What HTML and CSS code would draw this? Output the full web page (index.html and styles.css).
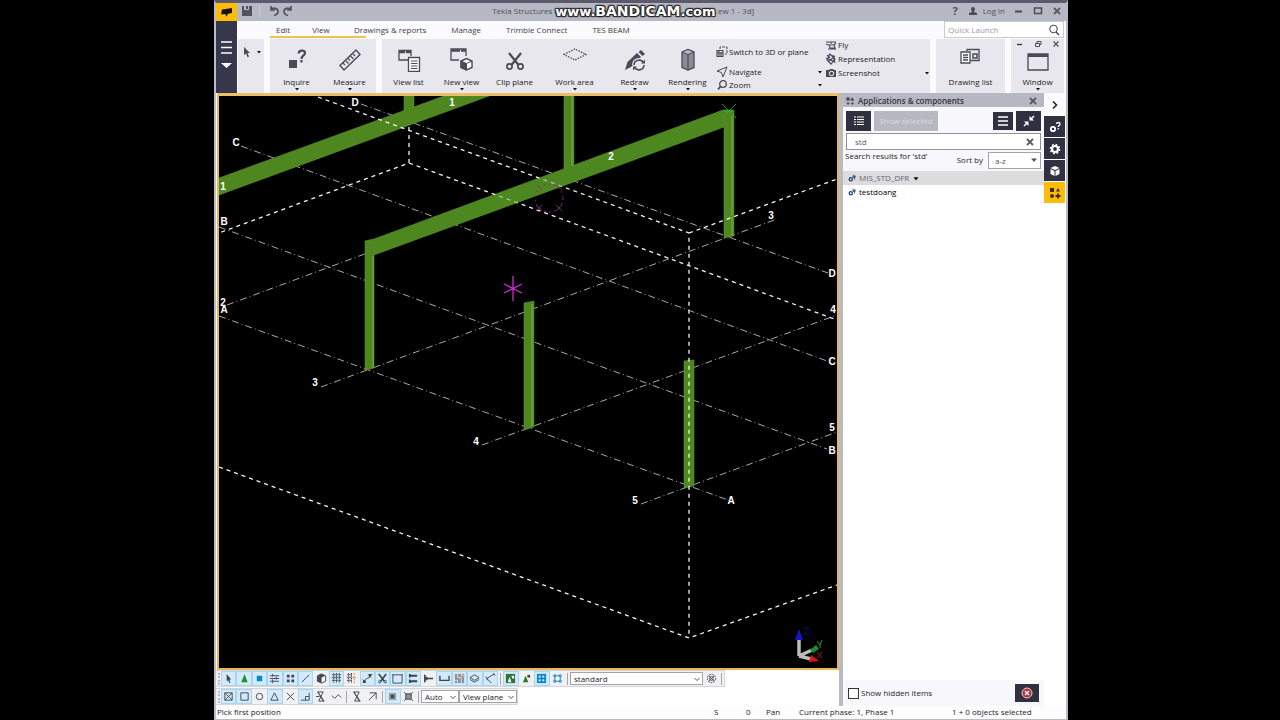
FILE: index.html
```html
<!DOCTYPE html>
<html lang="en">
<head>
<meta charset="utf-8">
<title>Tekla Structures</title>
<link rel="stylesheet" href="styles.css">
</head>
<body>
<svg class="sprite" aria-hidden="true">
  <symbol id="caret" viewBox="0 0 6 4"><path d="M1 1h4L3 3.500z" fill="#111"/></symbol>
  <symbol id="chev" viewBox="0 0 8 8"><path d="M1.500 3l2.500 2.500L6.500 3" fill="none" stroke="#555" stroke-width="1"/></symbol>
  <symbol id="close" viewBox="0 0 10 10"><path d="M2 2l6 6M8 2l-6 6" stroke="#5b5b66" stroke-width="1.800" fill="none"/></symbol>
  <symbol id="gears" viewBox="0 0 10 10"><g fill="none" stroke="#1f3f7d"><circle cx="3.500" cy="6.500" r="2" stroke-width="1.600"/><circle cx="7.500" cy="3.500" r="1.200" stroke-width="1.200"/><path d="M7 1L6 3M9 2L8 7" stroke-width="1"/></g></symbol>
</svg>
<div class="app">
  <header class="titlebar">
    <span class="logo"><svg viewBox="0 0 21 17" width="21" height="18"><path d="M6 6l10-1.500v5l-4 .8-1.500 3-1-2.500H5z" fill="#17130a"/></svg></span>
    <button class="plain" aria-label="Save"><svg viewBox="0 0 12 12" width="12" height="12"><path d="M1 1h2v4h5V1h3v10H1zM5 1h2v3H5z" fill="#51525e"/></svg></button>
    <span class="tsep"></span>
    <button class="plain" aria-label="Undo"><svg viewBox="0 0 12 12" width="12" height="12"><path d="M3 1v4h4M3 5c2-3 7-2 7 1.500C10 9 8 10 6 10.500" fill="none" stroke="#51525e" stroke-width="1.700"/></svg></button>
    <button class="plain" aria-label="Redo"><svg viewBox="0 0 12 12" width="12" height="12"><path d="M9 1v4H5M9 5C7 2 2 3 2 6.500 2 9 4 10 6 10.500" fill="none" stroke="#51525e" stroke-width="1.700"/></svg></button>
    <div class="title"><span>Tekla Structures -</span><span>ew 1 - 3d]</span><strong class="mark">www.<b>BANDICAM</b>.com</strong></div>
    <button class="plain help" aria-label="Help">?</button>
    <button class="plain login"><svg viewBox="0 0 10 10" width="10" height="10"><path d="M3 3a2 2 0 0 1 4 0c0 1.500-1 1.500-1 3l3 1v2H1V7l3-1c0-1.500-1-1.500-1-3z" fill="#4b4b58"/></svg>Log in</button>
    <button class="win" aria-label="Minimize"><svg viewBox="0 0 10 10" width="10" height="10"><path d="M1 5.500h7" stroke="#4b4b58" stroke-width="2"/></svg></button>
    <button class="win" aria-label="Maximize"><svg viewBox="0 0 10 10" width="10" height="10"><path d="M1.500 2v5.500h7V2z" fill="none" stroke="#4b4b58" stroke-width="1.500"/></svg></button>
    <button class="win" aria-label="Close"><svg width="10" height="10"><use href="#close"/></svg></button>
  </header>

  <div class="top">
    <button class="menu" aria-label="Menu"><svg viewBox="0 0 21 72" width="21" height="72"><path d="M5 21h11M5 26.500h11M5 32h11" stroke="#fff" stroke-width="1.500"/><path d="M5 42h11l-5.500 5z" fill="#fff"/></svg></button>
    <div class="topmain">
      <div class="tabrow">
        <nav class="tabs">
          <span class="active"><a href="#">Edit</a><a href="#">View</a></span><a href="#" class="reports">Drawings &amp; reports</a><a href="#">Manage</a><a href="#">Trimble Connect</a><a href="#">TES BEAM</a>
        </nav>
        <label class="quick"><input type="text" placeholder="Quick Launch" aria-label="Quick Launch"><svg viewBox="0 0 12 12" width="12" height="12"><circle cx="5.500" cy="5" r="3.800" fill="none" stroke="#3f3f4b" stroke-width="1"/><path d="M8 8l3 3" stroke="#3f3f4b" stroke-width="1.300"/></svg></label>
      </div>
      <div class="ribbon">
        <div class="group pick"><button class="plain" aria-label="Select"><svg viewBox="0 0 10 12" width="10" height="12"><path d="M2 1l6 6H5.500l1.500 3.500-1.500.7L4 7.500 2 9z" fill="#4b4b58"/></svg></button><svg width="6" height="4"><use href="#caret"/></svg></div>
        <div class="group">
          <button class="big"><svg viewBox="0 0 24 24" width="24" height="24"><path d="M4 12h8v8H4z" fill="#4b4b58"/><path d="M13.500 5.500C14 1.500 20 2 20 5c0 2.500-3.500 2.500-3.500 6M16.500 12v2.500" fill="none" stroke="#4b4b58" stroke-width="2.200"/></svg><span>Inquire</span><svg class="car" width="6" height="4"><use href="#caret"/></svg></button>
          <button class="big"><svg viewBox="0 0 24 24" width="24" height="24"><path d="M2 17.500L18 2l4 4.500L6 22z" fill="none" stroke="#4b4b58" stroke-width="1.400"/><path d="M5 15l2 2M7.500 12.500l3 3M10 10.500l2 2M12.500 8l3 3M15 6l2 2" stroke="#4b4b58" stroke-width="1.200"/></svg><span>Measure</span><svg class="car" width="6" height="4"><use href="#caret"/></svg></button>
        </div>
        <div class="group wide">
          <button class="big"><svg viewBox="0 0 24 24" width="24" height="24"><path d="M11 12H2V2.500h12V8" fill="none" stroke="#4b4b58" stroke-width="1.300"/><path d="M2 4h12" stroke="#4b4b58" stroke-width="2.500" stroke-dasharray="6 1"/><path d="M11.500 9.500h11v14h-11z" fill="#fff" stroke="#4b4b58" stroke-width="1.300"/><path d="M14 13h6.500M14 15.500h6.500M14 18h6.500M14 20.500h6.500" stroke="#4b4b58" stroke-width="1.200"/></svg><span>View list</span></button>
          <button class="big"><svg viewBox="0 0 24 24" width="24" height="24"><path d="M9 12H1V1h15v7" fill="none" stroke="#4b4b58" stroke-width="1.300"/><path d="M1 2.500h15" stroke="#4b4b58" stroke-width="2.500" stroke-dasharray="9 1"/><path d="M11 13l5.500-2.500L22 13v6.500L16.500 22 11 19.500z" fill="#fff" stroke="#4b4b58" stroke-width="1.400"/><path d="M11 13l5.500 2.500V22L11 19.500zM16.500 15.500L22 13" fill="#4b4b58" stroke="#4b4b58"/></svg><span>New view</span><svg class="car" width="6" height="4"><use href="#caret"/></svg></button>
          <button class="big"><svg viewBox="0 0 24 24" width="24" height="24"><path d="M6 5l9.500 12M18 5L8.500 17" stroke="#4b4b58" stroke-width="2.200"/><circle cx="6.500" cy="18.500" r="2.600" fill="none" stroke="#4b4b58" stroke-width="1.700"/><circle cx="17.500" cy="18.500" r="2.600" fill="none" stroke="#4b4b58" stroke-width="1.700"/></svg><span>Clip plane</span></button>
          <button class="big area"><svg viewBox="0 0 24 24" width="24" height="24"><path d="M1 6.500L12 1l11 5.500L12 12z" fill="none" stroke="#4b4b58" stroke-width="1.300" stroke-dasharray="1.500 1.200"/></svg><span>Work area</span><svg class="car" width="6" height="4"><use href="#caret"/></svg></button>
          <button class="big"><svg viewBox="0 0 24 24" width="24" height="24"><path d="M2 22l2.500-8 9.500-9 4 4-10 10zM15.500 4L18 2l4 4-2.500 2z" fill="#4b4b58"/><path d="M11 17a5 5 0 0 1 9.500-2M21 17a5 5 0 0 1-9.500 2" stroke="#e8e7ee" stroke-width="4" fill="none"/><path d="M11 17a5 5 0 0 1 9.500-2M21 17a5 5 0 0 1-9.500 2" stroke="#4b4b58" stroke-width="1.600" fill="none"/><path d="M18 15.500h4v-4zM14 18.500h-4v4z" fill="#4b4b58"/></svg><span>Redraw</span><svg class="car" width="6" height="4"><use href="#caret"/></svg></button>
          <button class="big"><svg viewBox="0 0 24 24" width="24" height="24"><path d="M6 4L12 1.500 18 4v15.500L12 22l-6-2.500z" fill="#8b8b96" stroke="#4b4b58" stroke-width="1.300"/><path d="M12 6.500V22" fill="none" stroke="#4b4b58" stroke-width="1.200"/><path d="M6 4l6-2.500L18 4l-6 2.500z" fill="#b9b9c2" stroke="#4b4b58"/></svg><span>Rendering</span><svg class="car" width="6" height="4"><use href="#caret"/></svg></button>
          <div class="smallcol three">
            <button class="small"><svg viewBox="0 0 12 12" width="12" height="12"><path d="M4 3V1h7v7H9" fill="none" stroke="#4b4b58" stroke-dasharray="3 1"/><path d="M1 4.500h6v6H1zM3 4.500v6M1 7h6M5 6v4" fill="none" stroke="#4b4b58" stroke-width="1.200"/></svg>Switch to 3D or plane</button>
            <button class="small"><svg viewBox="0 0 12 12" width="12" height="12"><path d="M1 5l10-4-4 10-1.500-4.500z" fill="none" stroke="#4b4b58"/></svg>Navigate<svg class="end" width="6" height="4"><use href="#caret"/></svg></button>
            <button class="small"><svg viewBox="0 0 12 12" width="12" height="12"><circle cx="7" cy="5" r="3.300" fill="none" stroke="#4b4b58" stroke-width="1.300"/><path d="M4.500 7.500L2 10.500" stroke="#4b4b58" stroke-width="1.800"/></svg>Zoom<svg class="end" width="6" height="4"><use href="#caret"/></svg></button>
          </div>
          <div class="smallcol tight">
            <button class="small"><svg viewBox="0 0 12 12" width="12" height="12"><path d="M1 3h10M6 3v2M1 5l3 1h5l2-2M4 6l1 3h5L9 5M3 10h8" fill="none" stroke="#4b4b58" stroke-width="1.100"/></svg>Fly</button>
            <button class="small"><svg viewBox="0 0 12 12" width="12" height="12"><path d="M2 2l3 3M5 1l5 5-4 5-4-4zM1 5l9 4M8 2l2 8M3 9l7-6" fill="none" stroke="#4b4b58" stroke-width="1.200"/></svg>Representation</button>
            <button class="small"><svg viewBox="0 0 12 12" width="12" height="12"><path d="M1 3h3l1-1h3l1 1h2v7H1z" fill="#4b4b58"/><circle cx="6.500" cy="6.500" r="2.200" fill="none" stroke="#fff"/></svg>Screenshot<svg class="end" width="6" height="4"><use href="#caret"/></svg></button>
          </div>
        </div>
        <div class="group"><button class="big draw"><svg viewBox="0 0 24 24" width="24" height="24"><path d="M2 4h9v11H2z" fill="#fff" stroke="#4b4b58" stroke-width="1.300"/><path d="M4 7h5M4 9.500h5M4 12h5M8 3V1.500h12v11h-9" fill="none" stroke="#4b4b58" stroke-width="1.300"/><path d="M14 6h4v4h-4z" fill="none" stroke="#4b4b58" stroke-width="1.500"/></svg><span>Drawing list</span></button></div>
        <div class="group window">
          <div class="mdi"><button class="plain" aria-label="Minimize view"><svg viewBox="0 0 8 8" width="8" height="8"><path d="M1 4.500h5" stroke="#333" stroke-width="1.300"/></svg></button><button class="plain" aria-label="Restore view"><svg viewBox="0 0 8 8" width="8" height="8"><path d="M3 3V1.500h4v3H5.500M1.500 3.500h4v3h-4z" fill="none" stroke="#4b4b58"/></svg></button><button class="plain" aria-label="Close view"><svg width="8" height="8"><use href="#close"/></svg></button></div>
          <button class="big winbtn"><svg viewBox="0 0 24 20" width="24" height="20"><path d="M2 2h20v16H2z" fill="none" stroke="#4b4b58" stroke-width="1.300"/><path d="M2 3.500h20" stroke="#4b4b58" stroke-width="3"/></svg><span>Window</span><svg class="car" width="6" height="4"><use href="#caret"/></svg></button>
        </div>
      </div>
    </div>
  </div>

  <main class="work">
    <section class="left">
      <div class="stage">
        <svg viewBox="219 96 618 572" preserveAspectRatio="xMinYMin slice" role="img" aria-label="3D model view">
          <g class="grid">
            <path d="M361 104L828 273M241 146L827 361M219 227L827 449M219 316L728 500M227 305L370 252M321 387L777 219M482 445L837 315M641 504L837 432"/>
          </g>
          <g fill="#4e871f" stroke="#5f9230" stroke-width=".6">
            <path d="M404 96h10v18h-10zM564 96h10v76h-10z"/>
            <path d="M219 178L444 96h45L219 195z"/>
            <path d="M365 241l9-2L723 110h11l-10 17L374 255z"/>
            <path d="M365 241l9 2v125l-9 2zM724 111h10v125l-10 2zM524 303l10-2v126l-10 3zM684 361l10-1v126l-10 2z"/>
          </g>
          <path d="M373 256v112M732 116v120M532 304v122M572 96v70" stroke="#68993a" stroke-width="2" fill="none"/>
          <path class="box" d="M318 97L689 233V638M409 127v36L219 233M409 163L837 320M689 233L837 179M219 467L689 638L837 585"/>
          <path d="M374 255V240L724 110v17z" fill="#4e871f" opacity=".45"/>
          <path d="M513 276v25M504 284l18 9M522 284l-18 9" stroke="#d02bd0" stroke-width="1.300"/>
          <circle cx="549" cy="198" r="14" fill="none" stroke="#8a2a86" stroke-dasharray="2 3"/>
          <path d="M536 205l6 6M542 205l-6 6M556 205l6 6M562 205l-6 6M537 185l5 5M557 185l5 5" stroke="#8a2a86" stroke-width=".8"/>
          <path d="M722 104l14 14M736 104l-14 14M724 111h10" stroke="#28b83a" stroke-width=".8"/>
          <g class="lbl">
            <text x="355" y="106">D</text><text x="452" y="106">1</text><text x="236" y="146">C</text><text x="223" y="190">1</text><text x="224" y="225">B</text><text x="223" y="306">2</text><text x="224" y="313">A</text><text x="611" y="160">2</text><text x="771" y="219">3</text><text x="832" y="277">D</text><text x="833" y="313">4</text><text x="832" y="365">C</text><text x="832" y="431">5</text><text x="832" y="454">B</text><text x="731" y="504">A</text><text x="635" y="504">5</text><text x="476" y="445">4</text><text x="315" y="386">3</text>
          </g>
          <path d="M799 656V638M799 656l13-6M799 656l12 3" stroke="#bcbcbc" stroke-width="3.500"/>
          <path d="M795 640l4-11 4 11z" fill="#1414cc"/><path d="M810 650l6-5 3 4-6 4z" fill="#1d8a2a"/><path d="M811 655l8 6-10 1z" fill="#d81818"/>
          <path d="M803 628h6l-5 6h6" stroke="#0c0c7a" fill="none"/><path d="M817 641l3 4 2-5M820 645v3" stroke="#1f9a33" fill="none"/><path d="M817 652l5 6M822 652l-5 6" stroke="#a01515"/>
        </svg>
      </div>
      <div class="bar one">
        <span class="grip"></span>
        <div class="tools eighteen">
          <button class="t on" aria-label="Select all"><svg viewBox="0 0 12 12"><path d="M4 1l5 6H7l1 4H7L5.500 8 4 9z"/></svg></button>
          <button class="t on" aria-label="Select components"><svg viewBox="0 0 12 12"><path d="M6 1l3.500 9h-7z" fill="#23902f"/></svg></button>
          <button class="t on" aria-label="Select parts"><svg viewBox="0 0 12 12"><path d="M3 3h6v6H3z" fill="#0b88c8"/></svg></button>
          <button class="t on" aria-label="Select surfaces"><svg viewBox="0 0 12 12"><path class="s" d="M1 3h10M1 6h10M1 9h10M4 1v3M8 4v3M4 7v4"/></svg></button>
          <button class="t on" aria-label="Select points"><svg viewBox="0 0 12 12"><path d="M2 2h3v3H2zM7 2h3v3H7zM2 7h3v3H2zM7 7h3v3H7z"/></svg></button>
          <button class="t on" aria-label="Select lines"><svg viewBox="0 0 12 12"><path class="s" d="M2 10l8-8"/></svg></button>
          <button class="t" aria-label="Select objects"><svg viewBox="0 0 12 12"><path class="s" d="M1.500 3L6 1l4.500 2v6L6 11 1.500 9z"/><path d="M1.500 3L6 5v6L1.500 9zM6 1l4 2-4 2-4-2z"/></svg></button>
          <button class="t on" aria-label="Select grids"><svg viewBox="0 0 12 12"><path class="s" d="M1 2h10M1 5h10M1 8h10M3 0v11M6 0v11M9 0v11" stroke-dasharray="2 .6"/></svg></button>
          <button class="t" aria-label="Select grid lines"><svg viewBox="0 0 12 12"><path class="s" d="M1 2h5M1 5h5M1 8h5M3 0v11M6 0v11" stroke-dasharray="2 .6"/><path class="s tan" d="M9 0v11M7 5h4" stroke-dasharray="2 1"/></svg></button>
          <button class="t on" aria-label="Select welds"><svg viewBox="0 0 12 12"><path class="s" d="M1 10l4-4 3-1 3-4M1 7l3 3M7 2l3 3"/><path d="M1 8h3v3H1zM7 1h4L8 5z"/></svg></button>
          <button class="t on" aria-label="Select cuts"><svg viewBox="0 0 12 12"><path class="s" d="M2 1l6 8M10 1L4 9" stroke-width="1.800"/><circle class="s" cx="3" cy="9.500" r="1.300"/><circle class="s" cx="9" cy="9.500" r="1.300"/></svg></button>
          <button class="t on" aria-label="Select views"><svg viewBox="0 0 12 12"><path class="s" d="M0 2h12M1 2v9h10V2"/></svg></button>
          <button class="t on" aria-label="Select bolt groups"><svg viewBox="0 0 12 12"><path class="s" d="M2 3h8M2 9h8M2 1v4M2 7v4" stroke-width="2"/></svg></button>
          <button class="t" aria-label="Select bolts"><svg viewBox="0 0 12 12"><path class="s" d="M2 2v8M4 4v4M2 6h9" stroke-width="1.800"/></svg></button>
          <button class="t on" aria-label="Select rebars"><svg viewBox="0 0 12 12"><path class="s" d="M1 3v5h10V3" stroke-width="1.500"/></svg></button>
          <button class="t on" aria-label="Select pours"><svg viewBox="0 0 12 12"><path d="M1 1h10v10H1z" fill="#8e929c"/><path d="M4 1v4h4v6M1 8h3v3M8 1v2h3" fill="none" stroke="#dfe2e8"/></svg></button>
          <button class="t on" aria-label="Select pour breaks"><svg viewBox="0 0 12 12"><path class="s" d="M1 5l5-3 5 3-5 3zM1 7l5 3 5-3"/></svg></button>
          <button class="t on" aria-label="Select distances"><svg viewBox="0 0 12 12"><path class="s" d="M2 6l8-5M2 6l5 5M1 4l2 4M9 0l2 3"/></svg></button>
        </div>
        <span class="sep"></span>
        <div class="tools four">
          <button class="t on" aria-label="Select in assemblies"><svg viewBox="0 0 12 12"><path d="M1 1h10v10H1z" fill="#2f7136"/><path d="M3 10l2-6 2 6zM7 3h3v3H8z" fill="#fff"/></svg></button>
          <button class="t" aria-label="Select components objects"><svg viewBox="0 0 12 12"><path d="M2 10l3-7 3 7z" fill="#277a31"/><path d="M7 2h3v3H7z"/></svg></button>
          <button class="t on" aria-label="Select assemblies"><svg viewBox="0 0 12 12"><path d="M1 1h10v10H1z" fill="#0b88c8"/><path d="M3 3h2v2H3zM7 3h2v2H7zM3 7h2v2H3zM7 7h2v2H7z" fill="#fff"/></svg></button>
          <button class="t" aria-label="Select assembly objects"><svg viewBox="0 0 12 12"><path class="s blue" d="M2 2h2v2H2zM8 2h2v2H8zM2 8h2v2H2zM8 8h2v2H8zM4 3h4M4 9h4M3 4v4M9 4v4"/></svg></button>
        </div>
        <span class="sep"></span>
        <span class="pickbox filter"><select aria-label="Selection filter"><option>standard</option></select><svg width="8" height="8"><use href="#chev"/></svg></span>
        <button class="t last" aria-label="Filter settings"><svg viewBox="0 0 12 12"><circle class="s" cx="6" cy="6" r="4.500" stroke-dasharray="2 1"/><circle class="s" cx="6" cy="6" r="2"/><path class="s" d="M3 3l6 6M9 3L3 9"/></svg></button>
        <span class="sep"></span>
      </div>
      <div class="bar two">
        <span class="grip"></span>
        <div class="tools eight">
          <button class="t on" aria-label="Snap to points"><svg viewBox="0 0 12 12"><path class="s" d="M2 2h8v8H2zM2 2l8 8M10 2l-8 8"/></svg></button>
          <button class="t on" aria-label="Snap to end points"><svg viewBox="0 0 12 12"><path class="s" d="M2 2h8v8H2z"/></svg></button>
          <button class="t" aria-label="Snap to centers"><svg viewBox="0 0 12 12"><circle class="s" cx="6" cy="6" r="3.500"/></svg></button>
          <button class="t on" aria-label="Snap to midpoints"><svg viewBox="0 0 12 12"><path class="s" d="M6 2l4 8H2z"/></svg></button>
          <button class="t" aria-label="Snap to intersections"><svg viewBox="0 0 12 12"><path class="s" d="M2 2l8 8M10 2l-8 8"/></svg></button>
          <button class="t on" aria-label="Snap perpendicular"><svg viewBox="0 0 12 12"><path class="s" d="M1 10h9V2M6 10V6h4"/></svg></button>
          <button class="t" aria-label="Snap to extensions"><svg viewBox="0 0 12 12"><path class="s" d="M3 1h6L4 11h6zM3 1l6 10M1 6h4"/></svg></button>
          <button class="t" aria-label="Snap to any position"><svg viewBox="0 0 12 12"><path class="s" d="M1 5l3 3 4-4 3 3"/></svg></button>
        </div>
        <span class="sep"></span>
        <div class="tools pair">
          <button class="t" aria-label="Snap to nearest"><svg viewBox="0 0 12 12"><path class="s" d="M3 1h6L4 11h6zM3 1l6 10"/></svg></button>
          <button class="t" aria-label="Snap to lines"><svg viewBox="0 0 12 12"><path class="s" d="M2 10l8-8M3 2h7v7"/></svg></button>
        </div>
        <span class="sep"></span>
        <div class="tools pair">
          <button class="t on" aria-label="Snap to reference lines"><svg viewBox="0 0 12 12"><path d="M2 2h8v8H2z" fill="#9ba1ac"/><path d="M4 4h4v4H4z"/></svg></button>
          <button class="t" aria-label="Snap to geometry lines"><svg viewBox="0 0 12 12"><path d="M3 3h6v6H3z" fill="#8b909a"/><path class="s" d="M1 1l2 2M11 1L9 3M1 11l2-2M11 11L9 9M3 3h6v6H3z"/></svg></button>
        </div>
        <span class="sep"></span>
        <span class="pickbox auto"><select aria-label="Snap depth"><option>Auto</option></select><svg width="8" height="8"><use href="#chev"/></svg></span>
        <span class="pickbox plane"><select aria-label="Plane type"><option>View plane</option></select><svg width="8" height="8"><use href="#chev"/></svg></span>
      </div>
    </section>

    <aside class="panel">
      <div class="phead"><svg viewBox="0 0 10 10" width="8" height="8"><path d="M1 1h3v3H1zM7.500 1L10 4H6zM8 6v4M6 8h4" fill="#4b4b58" stroke="#4b4b58"/><circle cx="2.500" cy="8" r="1.500" fill="#4b4b58"/></svg><h2>Applications &amp; components</h2><button class="plain" aria-label="Close panel"><svg width="10" height="10"><use href="#close"/></svg></button></div>
      <div class="pbtns">
        <button class="dark" aria-label="List view"><svg viewBox="0 0 12 12" width="12" height="12"><path d="M1 2h2M1 4.500h2M1 7h2M1 9.500h2M4 2h7M4 4.500h7M4 7h7M4 9.500h7" stroke="#fff" stroke-width="1.200"/></svg></button>
        <button class="disabled" disabled>Show selected</button>
        <button class="dark push small2" aria-label="Panel menu"><svg viewBox="0 0 12 12" width="12" height="12"><path d="M1 2h10M1 6h10M1 10h10" stroke="#fff" stroke-width="1.600"/></svg></button>
        <button class="dark" aria-label="Collapse"><svg viewBox="0 0 12 12" width="12" height="12"><path d="M1 11l3-3M11 1L8 4" stroke="#fff" stroke-width="1.500"/><path d="M1 6.500h4.500V11zM6.500 1v4.500H11z" fill="#fff"/></svg></button>
      </div>
      <label class="search"><input type="text" value="std" aria-label="Search components"><svg width="10" height="10"><use href="#close"/></svg></label>
      <div class="sort"><span class="res">Search results for 'std'</span><label for="sortby">Sort by</label><span class="pickbox az"><select id="sortby"><option>a-z</option></select><svg viewBox="0 0 8 8" width="8" height="8"><path d="M1 2.500h6L4 6z" fill="#555"/></svg></span></div>
      <ul class="list">
        <li class="sel"><svg width="8" height="8"><use href="#gears"/></svg>MIS_STD_DFR<svg width="8" height="5" viewBox="0 0 6 4"><use href="#caret"/></svg></li>
        <li><svg width="8" height="8"><use href="#gears"/></svg>testdoang</li>
      </ul>
      <div class="pfoot"><label><input type="checkbox">Show hidden items</label><button class="dark" aria-label="Cancel"><svg viewBox="0 0 12 12" width="12" height="12"><circle cx="6" cy="6" r="5" fill="#b5333e" stroke="#efc6ca"/><path d="M4 4l4 4M8 4L4 8" stroke="#fff" stroke-width="1.300"/></svg></button></div>
    </aside>

    <nav class="side">
      <button class="light" aria-label="Collapse side pane"><svg viewBox="0 0 12 12" width="12" height="12"><path d="M4 2.500L7.500 6 4 9.500" fill="none" stroke="#222" stroke-width="1.600"/></svg></button>
      <button aria-label="Properties help"><svg viewBox="0 0 12 12" width="12" height="12"><circle cx="4" cy="8" r="2.200" fill="none" stroke="#fff" stroke-width="1.800"/><path d="M7.500 3c0-2 3.500-2 3.500 0S9.200 4 9.200 6M9.200 7v1.500" fill="none" stroke="#fff" stroke-width="1.300"/></svg></button>
      <button aria-label="Settings"><svg viewBox="0 0 12 12" width="12" height="12"><circle cx="6" cy="6" r="3" fill="none" stroke="#fff" stroke-width="2.200"/><circle cx="6" cy="6" r="4.600" fill="none" stroke="#fff" stroke-width="1.500" stroke-dasharray="1.800 1.800"/></svg></button>
      <button aria-label="Reference models"><svg viewBox="0 0 12 12" width="12" height="12"><path d="M6 1l4.500 2L6 5 1.500 3zM1.500 4l4 2v5l-4-2zM10.500 4l-4 2v5l4-2z" fill="#fff"/></svg></button>
      <button class="gold" aria-label="Applications and components"><svg viewBox="0 0 12 12" width="12" height="12"><path d="M1 1h4v4H1zM9 1l2 3.500H7z" fill="#3b2f0c"/><path d="M9 6.500v5M6.500 9h5" stroke="#3b2f0c" stroke-width="1.800"/><circle cx="3" cy="9" r="2" fill="#3b2f0c"/></svg></button>
    </nav>
  </main>

  <footer class="status"><span class="prompt">Pick first position</span><span class="s1">S</span><span class="s2">0</span><span class="s3">Pan</span><span class="s4">Current phase: 1, Phase 1</span><span class="s5">1 + 0 objects selected</span></footer>
</div>
</body>
</html>
```
FILE: styles.css
```css
* { box-sizing: border-box; }
body { margin: 0; padding: 0 212px 0 214px; background: #000; color: #1c1c22; font: 8px/12px "Open Sans", "Noto Sans", sans-serif; }
button, input, select { font: inherit; color: inherit; margin: 0; }
button { padding: 0; border: 0; background: none; display: flex; align-items: center; justify-content: center; }
svg { display: block; flex: none; }
.sprite { position: absolute; width: 0; height: 0; }

.app { display: flex; flex-direction: column; min-height: 100vh; border: 2px solid #b8bac5; border-width: 3px 2px 1px 2px; border-top-color: #5b5a6c; background: #fff; }
.titlebar { display: flex; align-items: center; height: 18px; padding-bottom: 2px; background: #b6b8c3; color: #50515d; }
.logo { background: #fdbc0a; margin: 2px 4px 0 0; }
.tsep { width: 1px; height: 12px; background: #c8cad3; margin: 0 8px 0 6px; }
.titlebar .plain + .plain { margin-left: 2px; }
.title { position: relative; display: flex; justify-content: space-between; width: 262px; margin: 0 auto; white-space: nowrap; }
.mark { position: absolute; left: 63px; top: -1px; color: #fff; font: bold 13px/14px "DejaVu Sans", sans-serif; text-shadow: 0 0 2px #222, 1px 1px 1px #222, -1px -1px 1px #222, 1px -1px 1px #222, -1px 1px 1px #222; }
.mark b { font-size: 14px; }
.help { font-weight: 700; font-size: 11px; margin-right: 8px; }
.login { gap: 5px; margin-right: 4px; }
.win { margin: 0 4px 0 5px; }

.top { display: flex; }
.menu { width: 21px; background: #36374a; }
.topmain { flex: 1; min-width: 0; }
.tabrow { display: flex; justify-content: space-between; height: 18px; background: #fbfbfe; }
.tabs { display: flex; padding-left: 33px; }
.tabs a { color: #3c3c46; text-decoration: none; padding: 3px 12px 0 13px; height: 17px; white-space: nowrap; }
.active { display: flex; width: 96px; height: 17px; border-bottom: 2px solid #ecc34c; }
.active a { padding: 3px 16px 0 6px; }
.tabs .reports { padding-left: 0; margin-left: -12px; }
.quick { display: flex; align-items: center; width: 120px; height: 17px; margin-right: 2px; background: #fff; border: 1px solid #c9cad2; padding: 0 3px; }
.quick input { flex: 1; min-width: 0; border: 0; padding: 0; background: none; outline: 0; }
.quick input::placeholder { color: #9b9ba3; opacity: 1; }
.ribbon { display: flex; gap: 6px; height: 54px; padding: 0 2px 0 1px; background: #fbfbfe; }
.group { display: flex; background: #e8e7ee; padding-bottom: 1px; }
.pick { width: 26px; padding-left: 4px; gap: 4px; align-items: center; padding-bottom: 28px; }
.wide { flex: 1; min-width: 0; }
.big { width: 53px; flex-direction: column; justify-content: flex-start; padding-top: 9px; }
.big span { margin-top: 4px; white-space: nowrap; }
.big .car { margin-top: -1px; }
.area { width: 67px; }
.draw { width: 69px; }
.smallcol { display: flex; flex-direction: column; width: 109px; padding: 7px 0 0 2px; }
.three { gap: 1px; }
.three .small:first-child { margin-bottom: 7px; }
.tight { gap: 2px; padding-top: 0; flex: 1; }
.small { justify-content: flex-start; gap: 1px; white-space: nowrap; }
.small .end { margin-left: auto; }
.window { flex-direction: column; align-items: center; width: 53px; }
.mdi { display: flex; gap: 10px; padding-top: 1px; }
.winbtn { padding-top: 4px; }

.work { display: flex; flex: 1; background: #b8bac5; }
.left { display: flex; flex-direction: column; flex: 1; min-width: 0; background: #fff; }
.stage { flex: 1 1 0; min-height: 0; border: 2px solid #e9b951; border-top: 3px solid #ebc069; background: #000; margin-left: 1px; }
.stage svg { width: 100%; height: 100%; }
.grid path { fill: none; stroke: #a9a9a9; stroke-width: 1; stroke-dasharray: 7 3 1 3; }
.box { fill: none; stroke: #f4f4f4; stroke-width: 1.300; stroke-dasharray: 4 4; }
.lbl { fill: #fff; font: bold 10px "Liberation Sans", sans-serif; text-anchor: middle; }
.bar { display: flex; align-items: center; align-self: flex-start; height: 17px; margin-bottom: 1px; background: #f1f1f3; border: 1px solid #d5d6dc; border-left: 0; padding-left: 2px; }
.grip { width: 2px; height: 12px; margin-right: 1px; border-left: 2px dotted #b8b8be; }
.tools { display: flex; }
.eighteen { width: 277px; }
.four { width: 62px; }
.eight { width: 123px; }
.pair { width: 31px; }
.t { flex: 1; height: 15px; border: 1px solid transparent; }
.t.on { background: #d3eafa; border-color: #a9d5f2; }
.t svg { width: 11px; height: 11px; fill: #3f4450; }
.t .s { fill: none; stroke: #3f4450; }
.t .tan { stroke: #c08d4a; }
.t .blue { stroke: #0b88c8; }
.t.last { flex: none; width: 16px; }
.sep { width: 1px; height: 12px; margin: 0 2px; background: #a5a6ad; }
.pickbox { display: grid; align-items: center; background: #fff; border: 1px solid #a3a4aa; height: 13px; }
.pickbox > * { grid-area: 1 / 1; }
.pickbox select { appearance: none; width: 100%; border: 0; background: none; padding: 0 10px 0 3px; line-height: 11px; height: 11px; }
.pickbox svg { justify-self: end; margin-right: 1px; pointer-events: none; }
.filter { width: 133px; }
.auto { width: 38px; }
.plane { width: 58px; }

.panel { display: flex; flex-direction: column; width: 201px; margin-left: 4px; background: #f8f8fc; }
.phead { display: flex; align-items: center; height: 14px; background: #b6b8c3; padding: 2px 6px 0 3px; gap: 4px; }
.phead h2 { flex: 1; margin: 0; font-size: 8px; font-weight: 600; color: #33343f; }
.pbtns { display: flex; align-items: center; gap: 3px; padding: 3px 3px 2px; height: 26px; }
.dark { width: 25px; height: 20px; background: #2f3040; }
.small2 { width: 20px; height: 18px; }
.push { margin-left: auto; }
.disabled { width: 64px; height: 20px; background: #b8b9c0; color: #d8d9de; }
.search { display: flex; align-items: center; height: 17px; margin: 0 3px; padding: 0 5px 0 8px; background: #fff; border: 1px solid #8f9098; }
.search input { flex: 1; min-width: 0; border: 0; padding: 0; background: none; outline: 0; color: #55565f; }
.sort { display: flex; align-items: center; padding: 1px 3px 2px 2px; height: 21px; gap: 5px; }
.res { flex: 1; margin-bottom: 8px; white-space: nowrap; }
.az { width: 53px; height: 17px; color: #555; }
.az select { padding-left: 6px; }
.az svg { margin-right: 2px; }
.list { flex: 1; margin: 0; padding: 0; list-style: none; background: #fff; }
.list li { display: flex; align-items: center; gap: 3px; height: 14px; padding-left: 5px; color: #000; }
.list .sel { background: #dcdcdf; color: #66666c; }
.pfoot { display: flex; align-items: center; justify-content: space-between; height: 26px; padding: 0 5px; }
.pfoot label { display: flex; align-items: center; gap: 2px; }
.pfoot input { appearance: none; width: 11px; height: 11px; border: 1px solid #333; background: #fff; }
.pfoot .dark { width: 24px; height: 18px; }
.side { display: flex; flex-direction: column; gap: 1px; width: 22px; background: #fff; padding: 1px 1px 0 0; }
.side button { height: 21px; background: #2f3040; }
.side .light { background: #fbfbfe; }
.side .gold { background: #fdbc0a; }

.status { display: flex; height: 13px; padding-left: 1px; background: #fdfdfe; white-space: nowrap; }
.prompt { flex: 1; }
.s1 { width: 32px; }
.s2 { width: 20px; }
.s3 { width: 33px; }
.s4 { width: 153px; }
.s5 { width: 114px; }
```
